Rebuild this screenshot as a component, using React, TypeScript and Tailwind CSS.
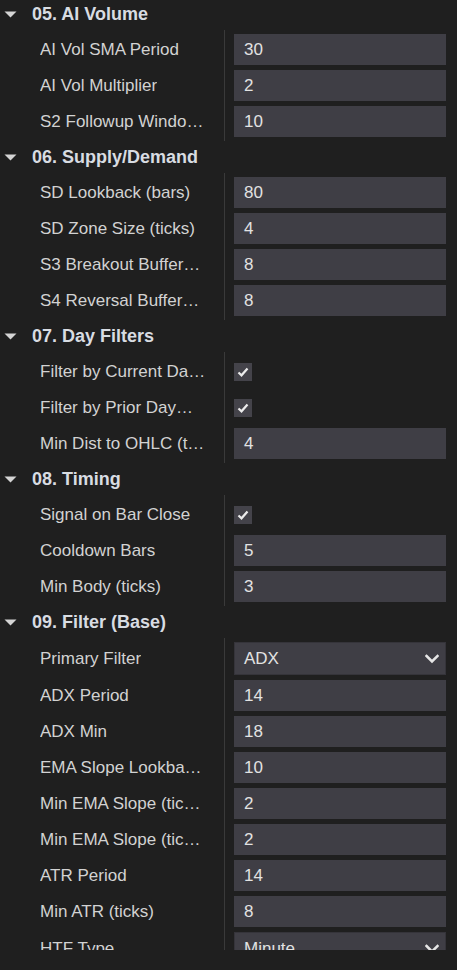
import React from "react";

type Val =
  | { kind: "text"; v: string }
  | { kind: "check" }
  | { kind: "select"; v: string };

type Row = { label: string; value: Val };
type Section = { title: string; rows: Row[] };

const t = (v: string): Val => ({ kind: "text", v });
const c: Val = { kind: "check" };
const s = (v: string): Val => ({ kind: "select", v });

const sections: Section[] = [
  {
    title: "05. AI Volume",
    rows: [
      { label: "AI Vol SMA Period", value: t("30") },
      { label: "AI Vol Multiplier", value: t("2") },
      { label: "S2 Followup Windo…", value: t("10") },
    ],
  },
  {
    title: "06. Supply/Demand",
    rows: [
      { label: "SD Lookback (bars)", value: t("80") },
      { label: "SD Zone Size (ticks)", value: t("4") },
      { label: "S3 Breakout Buffer…", value: t("8") },
      { label: "S4 Reversal Buffer…", value: t("8") },
    ],
  },
  {
    title: "07. Day Filters",
    rows: [
      { label: "Filter by Current Da…", value: c },
      { label: "Filter by Prior Day…", value: c },
      { label: "Min Dist to OHLC (t…", value: t("4") },
    ],
  },
  {
    title: "08. Timing",
    rows: [
      { label: "Signal on Bar Close", value: c },
      { label: "Cooldown Bars", value: t("5") },
      { label: "Min Body (ticks)", value: t("3") },
    ],
  },
  {
    title: "09. Filter (Base)",
    rows: [
      { label: "Primary Filter", value: s("ADX") },
      { label: "ADX Period", value: t("14") },
      { label: "ADX Min", value: t("18") },
      { label: "EMA Slope Lookba…", value: t("10") },
      { label: "Min EMA Slope (tic…", value: t("2") },
      { label: "Min EMA Slope (tic…", value: t("2") },
      { label: "ATR Period", value: t("14") },
      { label: "Min ATR (ticks)", value: t("8") },
      { label: "HTF Type", value: s("Minute") },
    ],
  },
];

function Chevron() {
  return (
    <svg width="14" height="10" viewBox="0 0 14 10" className="shrink-0">
      <polyline
        points="1.5,2 7,7.5 12.5,2"
        fill="none"
        stroke="#e6e6e6"
        strokeWidth="2.6"
        strokeLinecap="square"
      />
    </svg>
  );
}

function Check() {
  return (
    <div className="w-[18px] h-[18px] bg-[#44434a] flex items-center justify-center">
      <svg width="12" height="10" viewBox="0 0 12 10">
        <polyline
          points="1.5,5.5 4.5,8.3 10.5,1.5"
          fill="none"
          stroke="#ececec"
          strokeWidth="2.2"
        />
      </svg>
    </div>
  );
}

function ValueCell({ value }: { value: Val }) {
  if (value.kind === "check") {
    return (
      <div className="h-[31px] flex items-center">
        <Check />
      </div>
    );
  }
  if (value.kind === "select") {
    return (
      <div className="h-[33px] bg-[#3f3e45] border border-[#35343a] flex items-center justify-between pl-[9px] pr-[6px] text-[#e2e2e2]">
        <span>{value.v}</span>
        <Chevron />
      </div>
    );
  }
  return (
    <div className="h-[31px] bg-[#3f3e45] flex items-center pl-[10px] text-[#e2e2e2]">
      {value.v}
    </div>
  );
}

function rowH(v: Val) {
  return v.kind === "select" ? "h-[33px]" : "h-[31px]";
}

function SectionBlock({ section }: { section: Section }) {
  return (
    <div>
      <div className="h-[32px] flex items-center">
        <svg width="13" height="7" viewBox="0 0 13 7" className="ml-[4px] mr-[15px]">
          <polygon points="0.5,0.5 12.5,0.5 6.5,6.5" fill="#d4d4d4" />
        </svg>
        <span className="font-bold text-[18px] text-[#d8dce2]">{section.title}</span>
      </div>
      <div className="flex">
        <div className="w-[224px] shrink-0 flex flex-col gap-[5px] py-[4px] pl-[40px] pr-[8px]">
          {section.rows.map((r, i) => (
            <div
              key={i}
              className={`${rowH(r.value)} flex items-center whitespace-nowrap overflow-hidden text-[#d2d2d2]`}
            >
              <span className="truncate">{r.label}</span>
            </div>
          ))}
        </div>
        <div className="flex-1 border-l border-[#3a3a3a] flex flex-col gap-[5px] py-[4px] pl-[9px] pr-[11px]">
          {section.rows.map((r, i) => (
            <ValueCell key={i} value={r.value} />
          ))}
        </div>
      </div>
    </div>
  );
}

export default function App() {
  return (
    <div
      className="w-[457px] h-[970px] bg-[#1f1f1f] overflow-hidden text-[17px] leading-none"
      style={{ fontFamily: '"Liberation Sans", Arial, sans-serif' }}
    >
      <div className="h-[950px] overflow-hidden">
        <div className="-mt-[2px]">
          {sections.map((sec, i) => (
            <SectionBlock key={i} section={sec} />
          ))}
        </div>
      </div>
    </div>
  );
}
